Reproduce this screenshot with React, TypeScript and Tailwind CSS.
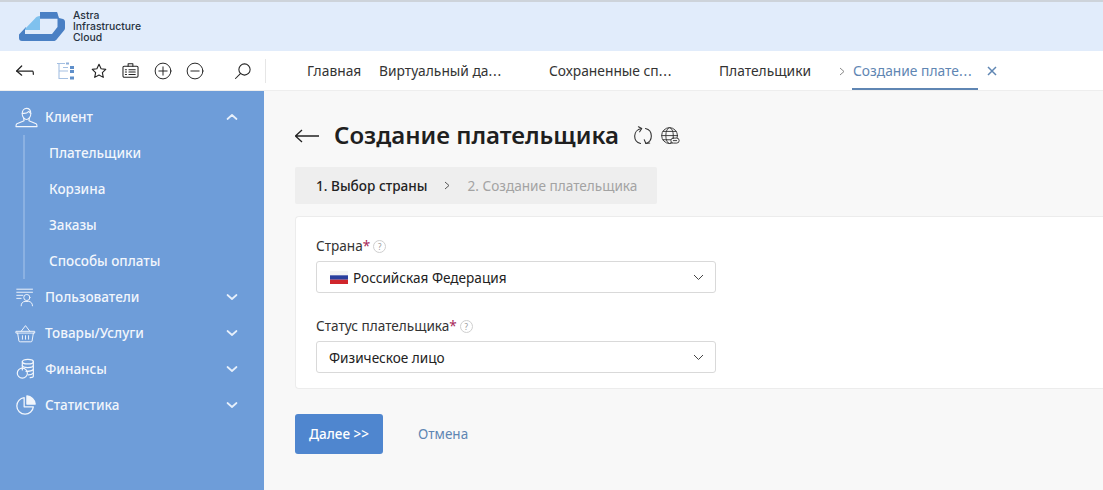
import React from "react";

const S = ({ size = 20, vb = "0 0 24 24", sw = 1.5, children, className = "" }: { size?: number; vb?: string; sw?: number; children: React.ReactNode; className?: string }) => (
  <svg width={size} height={size} viewBox={vb} fill="none" stroke="currentColor" strokeWidth={sw} strokeLinecap="round" strokeLinejoin="round" className={className}>
    {children}
  </svg>
);

const Logo = () => (
  <svg width="46" height="29" viewBox="0 0 46 29" fill="none">
    <path d="M21 0H38L40 6L44 7C45.500 7.500 46 8.500 46 10V16C46 17 45.500 18 45 18.500L38 27C37 28.500 36 29 34.500 29H3C1 29 0 28 0 26V22.500L7 15V22H21V0Z" fill="#4a80c4" />
    <path d="M6 17L16 6.500C17 5 18.500 4 21 4V18H6Z" fill="#7fc1ee" />
    <path d="M21 6.500H38.500L38.500 15L33 22H6V18H21Z" fill="#e1ecfb" />
    <path d="M21 0H38L39 6.500H21Z" fill="#4a80c4" />
  </svg>
);

const Back = () => (
  <S size={20} sw={1.5}><path d="M2 12H21C22 12 22 14 22 16" /><path d="M8 6L2 12L8 17" /></S>
);
const Tree = () => (
  <svg width="20" height="20" viewBox="0 0 20 20" fill="none" stroke="#a5c0e2" strokeWidth="1.100">
    <path d="M1 2.500H9M3 2.500V17.500H12M3 10H12M7 6.500H12" />
    <rect x="10" y="1.500" width="3" height="2" fill="#8fb0da" stroke="none" />
    <rect x="14" y="5" width="4" height="3" fill="#5f8fca" stroke="none" />
    <rect x="14" y="9" width="4" height="3" fill="#5f8fca" stroke="none" />
    <rect x="14" y="15.500" width="4" height="3" fill="#5f8fca" stroke="none" />
  </svg>
);
const Star = () => (
  <S size={18} sw={1.5}><path d="M12 3L14.800 9L21 9.800L16.500 14.200L17.700 20.500L12 17.400L6.300 20.500L7.500 14.200L3 9.800L9.200 9Z" /></S>
);
const Case = () => (
  <S size={19} sw={1.3}><rect x="2.500" y="6.500" width="19" height="14" rx="1.500" /><path d="M9 6.500V3.500H15V6.500" /><path d="M10 11H18M10 14H18M10 17H18" /><path d="M5.500 11H7M5.500 14H7M5.500 17H7" /></S>
);
const CirclePlus = () => (
  <S size={18} sw={1.3}><circle cx="12" cy="12" r="10.500" /><path d="M12 6.500V17.500M6.500 12H17.500" /></S>
);
const CircleMinus = () => (
  <S size={18} sw={1.3}><circle cx="12" cy="12" r="10.500" /><path d="M6.500 12H17.500" /></S>
);
const Search = () => (
  <S size={18} sw={1.4}><circle cx="14" cy="10" r="7.500" /><path d="M8.500 15.500L2 22" /></S>
);

const User = () => (
  <S size={23} sw={1.100}><path d="M7.500 8C7.500 4.500 9.500 2.500 12 2.500C14.500 2.500 16.500 4.500 16.500 8C16.500 11 14.500 14 12 14C9.500 14 7.500 11 7.500 8Z" /><path d="M7.500 7.500C10 8 13 7 14.500 5.500C15 6.500 16 7.500 16.500 7.500" /><path d="M9 13L9.500 15.500L2 18.500C1.500 19 1 20.500 1 21.500H23C23 20.500 22.500 19 22 18.500L14.500 15.500L15 13" /></S>
);
const Users = () => (
  <S size={21} sw={1.100}><path d="M2 2.500H20M2 6H20M2 9.500H9M2 13H7" /><circle cx="13.500" cy="12" r="3.500" /><path d="M7 21.500C7 18.500 9 16.500 11.500 16.500H15.500C18 16.500 20 18.500 20 21.500" /></S>
);
const Basket = () => (
  <S size={21} sw={1.100}><path d="M7 9.500L12 3L17 9.500" /><path d="M1.500 9.500H22.500V11.500H1.500Z" /><path d="M3 11.500L4.500 20.500C4.700 21.300 5 21.500 6 21.500H18C19 21.500 19.300 21.300 19.500 20.500L21 11.500" /><path d="M8.500 14.500V18.500M12 14.500V18.500M15.500 14.500V18.500" /></S>
);
const Coins = () => (
  <S size={22} sw={1.300}><ellipse cx="14" cy="4" rx="6" ry="2.500" /><path d="M8 4V13M20 4V20C20 21 18.500 21.500 16.500 21.500" /><path d="M8 8C8 9.500 11 10.500 14 10.500C17 10.500 20 9.500 20 8M12 14.500C15 14.500 18 14.500 20 12.500M14.500 18.500C16 18.500 18.500 18 20 16.500" /><circle cx="8" cy="16.500" r="5.500" /></S>
);
const Pie = () => (
  <S size={22} sw={1.400}><path d="M10 4C5.500 4.500 2 8.300 2 13C2 18 6 22 11 22C15.700 22 19.500 18.500 20 14H10Z" /><path d="M13 2C17.500 2.300 21.700 6.500 22 11H13Z" fill="currentColor" /></S>
);

const Chevron = ({ up }: { up?: boolean }) => (
  <svg width="12" height="8" viewBox="0 0 12 8" fill="none" stroke="#e7f0fb" strokeWidth="1.700" strokeLinecap="round" strokeLinejoin="round">
    <path d={up ? "M1.500 6L6 2L10.500 6" : "M1.500 2L6 6L10.500 2"} />
  </svg>
);

const Small = ({ color }: { color: string }) => (
  <svg width="6" height="9" viewBox="0 0 6 9" fill="none" stroke={color} strokeWidth="1"><path d="M1 1L5 4.500L1 8" /></svg>
);

const Dots = () => <span className="tracking-[0.8px]">...</span>;

const Row = ({ icon, label, up }: { icon: React.ReactNode; label: string; up?: boolean }) => (
  <div className="flex h-9 items-center pl-[15px] pr-[26px]">
    <span className="flex w-[30px] items-center">{icon}</span>
    <span className="flex-1 text-[13.500px] font-medium">{label}</span>
    <Chevron up={up} />
  </div>
);

const Help = () => (
  <span className="ml-[3px] flex h-[13px] w-[13px] items-center justify-center rounded-full border border-[#cfcfcf] text-[8px] leading-none text-[#999999]">?</span>
);

const Caret = () => (
  <svg width="11" height="7" viewBox="0 0 11 7" fill="none" stroke="#444444" strokeWidth="1"><path d="M1 1L5.500 5.500L10 1" /></svg>
);

const Field = ({ label, children }: { label: string; children: React.ReactNode }) => (
  <div className="w-[400px]">
    <div className="flex h-[21px] items-center text-[13.600px] text-[#333333]">
      {label}<span className="text-[#a8285a]">*</span><Help />
    </div>
    <div className="mt-[4px] flex h-[32px] items-center justify-between rounded-[3px] border border-[#d9d9d9] bg-white pl-[12px] pr-[11px] text-[13.600px] text-[#222222]">
      <span className="flex items-center pt-[2px]">{children}</span>
      <Caret />
    </div>
  </div>
);

export default function App() {
  return (
    <div className="flex h-[490px] w-[1103px] flex-col overflow-hidden bg-[#f8f8f8] font-['Noto_Sans',sans-serif]">
      <header className="flex h-[51px] items-center border-t-2 border-[#cdd3da] bg-[#e1ecfb] pl-[19px]">
        <Logo />
        <div className="ml-[8px] font-['Inter',sans-serif] text-[10.400px] font-medium leading-[11px] text-[#27323f]">
          <div>Astra</div>
          <div>Infrastructure</div>
          <div>Cloud</div>
        </div>
      </header>

      <nav className="flex h-[40px] items-center border-b border-[#eeeeee] bg-white text-[#222222]">
        <div className="flex h-[24px] w-[266px] items-center border-r border-[#e6e6e6] pl-[15px]">
          <Back />
          <span className="ml-[21px]"><Tree /></span>
          <span className="ml-[14px]"><Star /></span>
          <span className="ml-[13px]"><Case /></span>
          <span className="ml-[14px]"><CirclePlus /></span>
          <span className="ml-[14px]"><CircleMinus /></span>
          <span className="ml-[30px]"><Search /></span>
        </div>
        <div className="flex h-full items-center pl-[41px] text-[13.800px] text-[#333333]">
          <span className="w-[72px] pt-[2px]">Главная</span>
          <span className="w-[170px] pt-[2px]">Виртуальный да<Dots /></span>
          <span className="w-[170px] pt-[2px]">Сохраненные сп<Dots /></span>
          <span className="w-[120px] pt-[2px]">Плательщики</span>
          <span className="flex w-[13px] pt-[2px]"><Small color="#888888" /></span>
          <span className="relative flex h-full w-[126px] items-center pl-px pt-[2px] text-[#5f86b3]">
            <span>Создание плате<Dots /></span>
            <span className="absolute bottom-0 left-0 right-0 h-[2px] bg-[#5f86b3]" />
          </span>
          <svg className="ml-[9px]" width="10" height="10" viewBox="0 0 10 10" stroke="#5f86b3" strokeWidth="1.500"><path d="M1 1L9 9M9 1L1 9" /></svg>
        </div>
      </nav>

      <div className="flex flex-1">
        <aside className="w-[264px] bg-[#6e9dd9] pt-[8px] text-[#f2f6fc]">
          <Row icon={<User />} label="Клиент" up />
          <div className="my-[4px] ml-[23px] border-l-2 border-[#8bb1e2] pl-[24px] text-[13.500px] font-medium">
            <div className="-my-[4px]">
              <div className="flex h-9 items-center">Плательщики</div>
              <div className="flex h-9 items-center">Корзина</div>
              <div className="flex h-9 items-center">Заказы</div>
              <div className="flex h-9 items-center">Способы оплаты</div>
            </div>
          </div>
          <Row icon={<Users />} label="Пользователи" />
          <Row icon={<Basket />} label="Товары/Услуги" />
          <Row icon={<Coins />} label="Финансы" />
          <Row icon={<Pie />} label="Статистика" />
        </aside>

        <main className="flex-1 overflow-hidden pl-[31px] pt-[28px]">
          <div className="flex h-[34px] items-center">
            <svg width="24" height="14" viewBox="0 0 24 14" fill="none" stroke="#222222" strokeWidth="1.300"><path d="M0.500 7H24M7 1L0.500 7L7 13" /></svg>
            <h1 className="ml-[15px] pb-[2px] text-[24px] font-semibold leading-none text-[#1f1f1f]">Создание плательщика</h1>
            <span className="ml-[14px] text-[#333333]">
              <S size={20} sw={1.300}><path d="M10 3C5 4 2 8 2 12C2 17 5 20 9 21" /><path d="M6.500 1L10.500 3L8 7" /><path d="M15 3C19.500 4 22 8 22 12C22 16 20 19.500 15.500 21" /><path d="M13.500 16.500L15.500 21L20 20.500" /></S>
            </span>
            <span className="ml-[7px] text-[#333333]">
              <S size={20} sw={1.100}><circle cx="11.500" cy="11.500" r="9.500" /><ellipse cx="11.500" cy="11.500" rx="4.500" ry="9.500" /><path d="M2 11.500H21M3.500 6.500H19.500M3.500 16.500H13" /><rect x="13" y="14.500" width="10" height="6" rx="3" fill="#f8f8f8" /><path d="M16 17.500H20" /></S>
            </span>
          </div>

          <div className="mt-[14px] flex h-[37px] w-[362px] items-center rounded-[2px] bg-[#eeeeee] pl-[21px] text-[13.600px]">
            <span className="pt-[1px] font-medium text-[#222222]">1. Выбор страны</span>
            <span className="ml-[16px] flex"><Small color="#555555" /></span>
            <span className="ml-[18px] pt-[1px] text-[#a3a3a3]">2. Создание плательщика</span>
          </div>

          <section className="mt-[12px] flex h-[173px] flex-col gap-[23px] rounded-l-[4px] border border-r-0 border-[#ececec] bg-white pl-[20px] pt-[19px]">
            <Field label="Страна">
              <svg width="18" height="13" viewBox="0 0 18 13" className="ml-px mr-[5px]">
                <rect width="18" height="4.300" fill="#f4f4f4" />
                <rect y="4.300" width="18" height="4.400" fill="#2a3f9e" />
                <rect y="8.700" width="18" height="4.300" fill="#d0262c" />
              </svg>
              Российская Федерация
            </Field>
            <Field label="Статус плательщика">Физическое лицо</Field>
          </section>

          <div className="mt-[25px] flex items-center">
            <button className="h-[40px] w-[88px] rounded-[3px] bg-[#4f86cf] text-[13.500px] font-medium text-white">Далее &gt;&gt;</button>
            <span className="ml-[35px] text-[13.500px] text-[#5f86b3]">Отмена</span>
          </div>
        </main>
      </div>
    </div>
  );
}
